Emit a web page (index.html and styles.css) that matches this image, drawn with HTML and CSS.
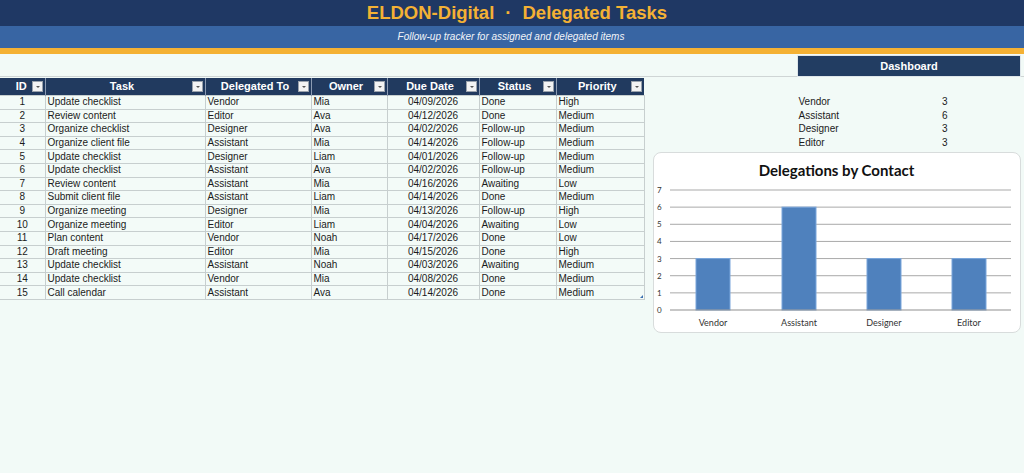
FILE: index.html
```html
<!DOCTYPE html>
<html lang="en">
<head>
<meta charset="utf-8">
<title>ELDON-Digital · Delegated Tasks</title>
<link rel="stylesheet" href="styles.css">
</head>
<body>
<header class="banner">
  <h1 class="title">ELDON-Digital<span class="dot">·</span>Delegated Tasks</h1>
</header>
<div class="subbar">Follow-up tracker for assigned and delegated items</div>
<div class="accent"></div>
<div class="toolbar">
  <button class="dash-btn" type="button">Dashboard</button>
</div>
<main class="content">
  <table class="tasks">
    <colgroup>
      <col class="c-id"><col class="c-task"><col class="c-del"><col class="c-own"><col class="c-due"><col class="c-status"><col class="c-pri">
    </colgroup>
    <thead>
      <tr>
        <th>ID<span class="filter"></span></th>
        <th>Task<span class="filter"></span></th>
        <th>Delegated To<span class="filter"></span></th>
        <th>Owner<span class="filter"></span></th>
        <th>Due Date<span class="filter"></span></th>
        <th>Status<span class="filter"></span></th>
        <th>Priority<span class="filter"></span></th>
      </tr>
    </thead>
    <tbody>
      <tr><td class="ctr">1</td><td>Update checklist</td><td>Vendor</td><td>Mia</td><td class="ctr">04/09/2026</td><td>Done</td><td>High</td></tr>
      <tr><td class="ctr">2</td><td>Review content</td><td>Editor</td><td>Ava</td><td class="ctr">04/12/2026</td><td>Done</td><td>Medium</td></tr>
      <tr><td class="ctr">3</td><td>Organize checklist</td><td>Designer</td><td>Ava</td><td class="ctr">04/02/2026</td><td>Follow-up</td><td>Medium</td></tr>
      <tr><td class="ctr">4</td><td>Organize client file</td><td>Assistant</td><td>Mia</td><td class="ctr">04/14/2026</td><td>Follow-up</td><td>Medium</td></tr>
      <tr><td class="ctr">5</td><td>Update checklist</td><td>Designer</td><td>Liam</td><td class="ctr">04/01/2026</td><td>Follow-up</td><td>Medium</td></tr>
      <tr><td class="ctr">6</td><td>Update checklist</td><td>Assistant</td><td>Ava</td><td class="ctr">04/02/2026</td><td>Follow-up</td><td>Medium</td></tr>
      <tr><td class="ctr">7</td><td>Review content</td><td>Assistant</td><td>Mia</td><td class="ctr">04/16/2026</td><td>Awaiting</td><td>Low</td></tr>
      <tr><td class="ctr">8</td><td>Submit client file</td><td>Assistant</td><td>Liam</td><td class="ctr">04/14/2026</td><td>Done</td><td>Medium</td></tr>
      <tr><td class="ctr">9</td><td>Organize meeting</td><td>Designer</td><td>Mia</td><td class="ctr">04/13/2026</td><td>Follow-up</td><td>High</td></tr>
      <tr><td class="ctr">10</td><td>Organize meeting</td><td>Editor</td><td>Liam</td><td class="ctr">04/04/2026</td><td>Awaiting</td><td>Low</td></tr>
      <tr><td class="ctr">11</td><td>Plan content</td><td>Vendor</td><td>Noah</td><td class="ctr">04/17/2026</td><td>Done</td><td>Low</td></tr>
      <tr><td class="ctr">12</td><td>Draft meeting</td><td>Editor</td><td>Mia</td><td class="ctr">04/15/2026</td><td>Done</td><td>High</td></tr>
      <tr><td class="ctr">13</td><td>Update checklist</td><td>Assistant</td><td>Noah</td><td class="ctr">04/03/2026</td><td>Awaiting</td><td>Medium</td></tr>
      <tr><td class="ctr">14</td><td>Update checklist</td><td>Vendor</td><td>Mia</td><td class="ctr">04/08/2026</td><td>Done</td><td>Medium</td></tr>
      <tr><td class="ctr">15</td><td>Call calendar</td><td>Assistant</td><td>Ava</td><td class="ctr">04/14/2026</td><td>Done</td><td class="last">Medium</td></tr>
    </tbody>
  </table>

  <aside class="panel">
    <dl class="summary">
      <dt>Vendor</dt><dd>3</dd>
      <dt>Assistant</dt><dd>6</dd>
      <dt>Designer</dt><dd>3</dd>
      <dt>Editor</dt><dd>3</dd>
    </dl>
    <section class="card">
      <h2 class="card-title">Delegations by Contact</h2>
      <svg class="chart" width="368" height="146" viewBox="0 0 368 146">
        <g class="grid">
          <line x1="17" y1="4" x2="358" y2="4"/>
          <line x1="17" y1="21.14" x2="358" y2="21.14"/>
          <line x1="17" y1="38.29" x2="358" y2="38.29"/>
          <line x1="17" y1="55.43" x2="358" y2="55.43"/>
          <line x1="17" y1="72.57" x2="358" y2="72.57"/>
          <line x1="17" y1="89.71" x2="358" y2="89.71"/>
          <line x1="17" y1="106.86" x2="358" y2="106.86"/>
        </g>
        <g class="ylabels">
          <text x="4" y="7">7</text>
          <text x="4" y="24.1">6</text>
          <text x="4" y="41.3">5</text>
          <text x="4" y="58.4">4</text>
          <text x="4" y="75.6">3</text>
          <text x="4" y="92.7">2</text>
          <text x="4" y="109.9">1</text>
          <text x="4" y="127">0</text>
        </g>
        <g class="bars">
          <rect x="43" y="72.57" width="34" height="51.43"/>
          <rect x="129" y="21.14" width="34" height="102.86"/>
          <rect x="214" y="72.57" width="34" height="51.43"/>
          <rect x="299" y="72.57" width="34" height="51.43"/>
        </g>
        <line class="axis" x1="17" y1="124" x2="358" y2="124"/>
        <g class="xlabels">
          <text x="60" y="140">Vendor</text>
          <text x="146" y="140">Assistant</text>
          <text x="231" y="140">Designer</text>
          <text x="316" y="140">Editor</text>
        </g>
      </svg>
    </section>
  </aside>
</main>
</body>
</html>
```

FILE: styles.css
```css
* { box-sizing: border-box; }

html, body {
  margin: 0;
  padding: 0;
}

body {
  background: #f2faf7;
  font-family: "Liberation Sans", Arial, sans-serif;
  color: #1b1b1b;
  width: 1024px;
  height: 473px;
  overflow: hidden;
}

.banner {
  height: 26px;
  background: #1f3864;
  display: flex;
  align-items: center;
  justify-content: center;
}

.title {
  margin: 0 0 0 10px;
  font-size: 18.5px;
  font-weight: bold;
  color: #f4b134;
  line-height: 26px;
  white-space: nowrap;
}

.dot {
  margin: 0 11px;
}

.subbar {
  height: 22px;
  background: #3865a3;
  color: #f2f4f8;
  font-style: italic;
  font-size: 10px;
  line-height: 22px;
  text-align: center;
  padding-right: 2px;
}

.accent {
  height: 6px;
  background: #f4b134;
}

.toolbar {
  height: 23px;
  display: flex;
  align-items: flex-start;
  justify-content: flex-end;
  padding-top: 1px;
  padding-right: 3px;
  border-bottom: 1px solid #cfd5d5;
}

.dash-btn {
  width: 224px;
  height: 22px;
  margin: 0;
  padding: 0;
  border: 1px solid #dfe6ea;
  background: #223d62;
  color: #ffffff;
  font-family: "Liberation Sans", Arial, sans-serif;
  font-size: 11px;
  font-weight: bold;
  line-height: 20px;
  text-align: center;
}

.content {
  display: flex;
  align-items: flex-start;
}

/* ---------- table ---------- */
.tasks {
  border-collapse: collapse;
  table-layout: fixed;
  width: 644px;
  font-size: 10px;
  margin-top: 1px;
}

.c-id { width: 45px; }
.c-task { width: 160px; }
.c-del { width: 106px; }
.c-own { width: 76px; }
.c-due { width: 92px; }
.c-status { width: 77px; }
.c-pri { width: 88px; }

.tasks th {
  position: relative;
  height: 17px;
  padding: 0 6px 0 0;
  background: #213a5f;
  color: #ffffff;
  font-size: 11px;
  font-weight: bold;
  text-align: center;
  line-height: 17px;
  border-left: 1px solid #8b9bb3;
  white-space: nowrap;
}

.tasks th:first-child { border-left: none; padding-right: 2px; }

.filter {
  position: absolute;
  right: 2px;
  top: 3px;
  width: 11px;
  height: 11px;
  background: #f3f3f3;
  border: 1px solid #9aa2ac;
}

.filter::after {
  content: "";
  position: absolute;
  left: 3px;
  top: 4px;
  border-left: 2px solid transparent;
  border-right: 2px solid transparent;
  border-top: 2px solid #555;
}

.tasks td {
  height: 13.6px;
  padding: 0 2px;
  line-height: 12px;
  border: 1px solid #c7cfcf;
  background: #f3fbf8;
  white-space: nowrap;
  overflow: hidden;
}

.tasks td:first-child { border-left: none; }

.tasks td.ctr { text-align: center; }

.tasks td.last { position: relative; }

.tasks td.last::after {
  content: "";
  position: absolute;
  right: 1px;
  bottom: 1px;
  border-left: 3px solid transparent;
  border-bottom: 3px solid #3b6fb0;
}

/* ---------- right panel ---------- */
.panel {
  flex: 1;
  display: flex;
  flex-direction: column;
  padding-top: 18px;
}

.summary {
  margin: 0 0 0 154px;
  display: grid;
  grid-template-columns: 120px 29px;
  grid-auto-rows: 13.6px;
  font-size: 10px;
  line-height: 13.6px;
}

.summary dt,
.summary dd {
  margin: 0;
}

.summary dd { text-align: right; }

.card {
  margin: 3px 0 0 8px;
  width: 368px;
  height: 181px;
  background: #ffffff;
  border: 1px solid #d8dcdc;
  border-radius: 8px;
  overflow: hidden;
}

.card-title {
  margin: 0;
  height: 33px;
  line-height: 35px;
  text-align: center;
  font-family: Lato, "Open Sans", sans-serif;
  font-size: 15px;
  font-weight: bold;
  color: #111;
}

.chart {
  display: block;
  margin-left: -1px;
  font-family: Lato, "Open Sans", sans-serif;
}

.grid line {
  stroke: #a9a9a9;
  stroke-width: 1;
}

.axis {
  stroke: #8f8f8f;
  stroke-width: 1;
}

.bars rect {
  fill: #4f81bd;
  stroke: #7aa6dc;
  stroke-width: 1;
}

.ylabels text {
  font-size: 8px;
  fill: #333;
}

.xlabels text {
  font-size: 9px;
  fill: #333;
  text-anchor: middle;
}
```
